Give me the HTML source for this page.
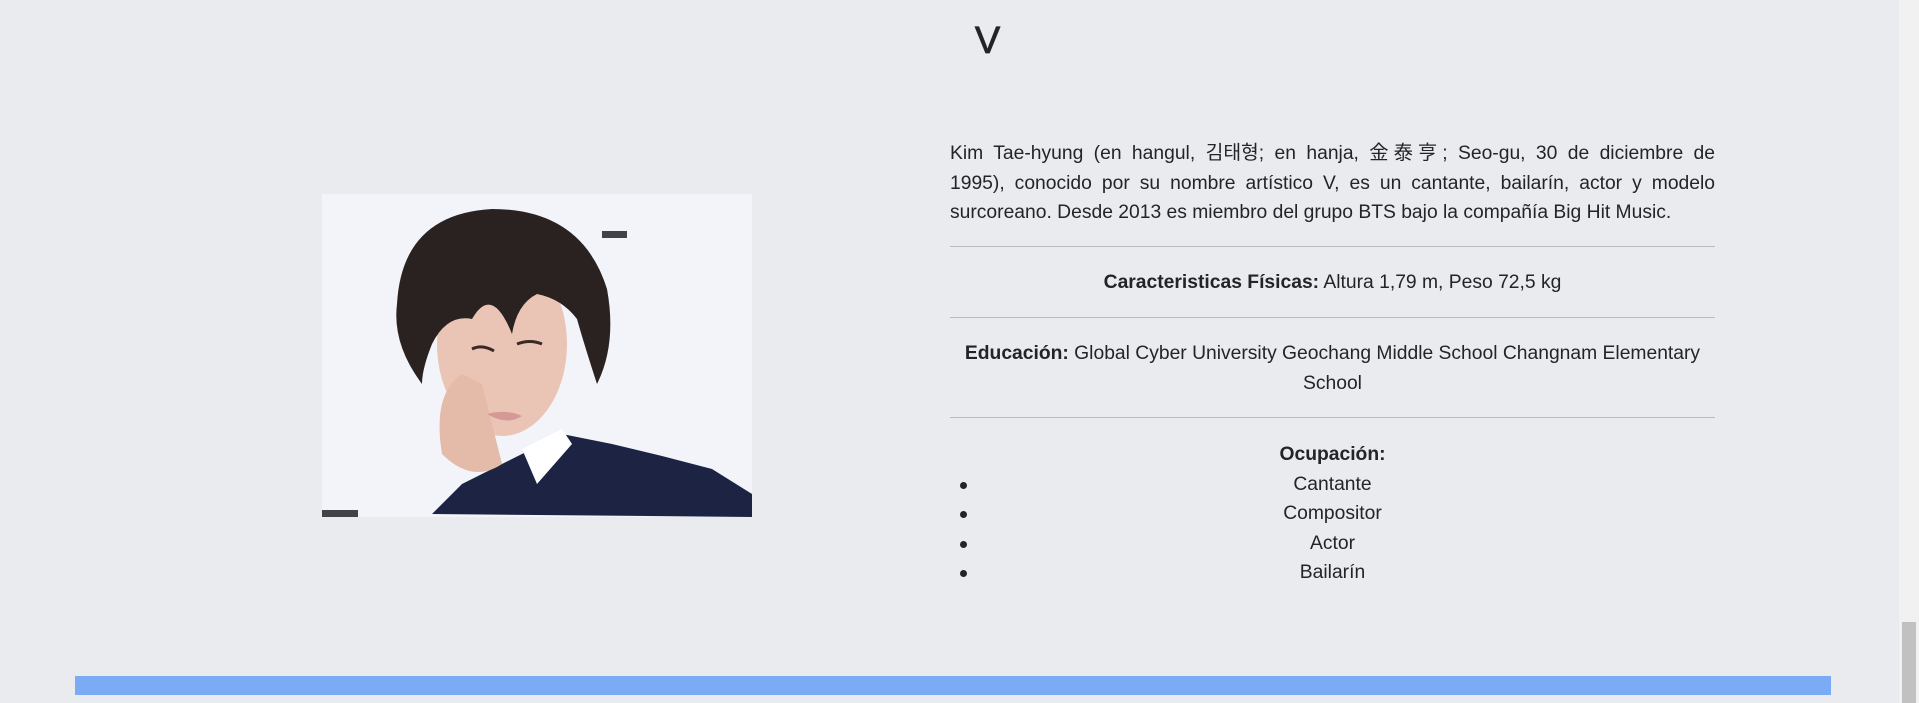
<!DOCTYPE html>
<html><head><meta charset="utf-8"><style>
html,body{margin:0;padding:0;}
body{width:1919px;height:703px;background:#eaebee;position:relative;overflow:hidden;font-family:"Liberation Sans","Noto Sans CJK KR",sans-serif;color:#212529;}
.t{position:absolute;}
h1{position:absolute;left:960px;width:55px;text-align:center;top:20px;margin:0;font-weight:normal;font-size:38px;-webkit-text-stroke:0.8px #212529;}
.col{position:absolute;left:950px;width:765px;font-size:19.3px;line-height:29.5px;}
p{margin:0;}
.j{display:block;text-align:justify;text-align-last:justify;}
hr{border:0;border-top:1px solid #b9bbbe;margin:0;position:absolute;left:950px;width:765px;}
.c{text-align:center;}
ul{margin:0;padding:0;list-style:none;}
li{position:relative;text-align:center;}
li:before{content:"";position:absolute;left:10px;top:12px;width:7px;height:7px;border-radius:50%;background:#212529;}
</style></head><body>
<h1>V</h1>
<svg class="t" style="left:322px;top:194px" width="430" height="323" viewBox="0 0 430 323">
<rect width="430" height="323" fill="#f2f4f9"/>
<rect x="280" y="37" width="25" height="7" fill="#404448"/>
<rect x="0" y="316" width="36" height="7" fill="#404448"/>
<path d="M110 320 L140 290 L200 260 L240 240 L290 250 L340 262 L390 275 L430 300 L430 323 Z" fill="#1d2342"/>
<path d="M200 255 L240 235 L250 250 L215 290 Z" fill="#fff"/>
<ellipse cx="180" cy="150" rx="65" ry="92" fill="#eac5b5"/>
<path d="M120 260 Q110 200 140 180 L160 190 L180 270 Q150 290 120 260Z" fill="#e4bba9"/>
<path d="M75 110 Q80 20 170 15 Q260 15 285 95 Q295 150 275 190 Q262 150 255 125 Q240 105 215 100 Q195 110 190 140 Q170 90 150 125 Q125 120 110 150 Q100 175 100 190 Q70 150 75 110Z" fill="#2a2220"/>
<path d="M195 150 Q208 145 220 150" stroke="#3a2a25" stroke-width="3" fill="none"/>
<path d="M150 155 Q160 150 172 157" stroke="#3a2a25" stroke-width="3" fill="none"/>
<path d="M165 220 Q185 215 200 222 Q185 232 165 220Z" fill="#d69a96"/>
</svg>
<div class="col" style="top:139px;"><p><span class="j">Kim Tae-hyung (en hangul, 김태형; en hanja, 金泰亨; Seo-gu, 30 de diciembre de</span><span class="j">1995), conocido por su nombre artístico V, es un cantante, bailarín, actor y modelo</span><span>surcoreano. Desde 2013 es miembro del grupo BTS bajo la compañía Big Hit Music.</span></p></div>
<hr style="top:246px">
<div class="col c" style="top:268px"><b>Caracteristicas Físicas:</b> Altura 1,79 m, Peso 72,5 kg</div>
<hr style="top:317px">
<div class="col c" style="top:339px;padding:0 12px;box-sizing:border-box;"><b>Educación:</b> Global Cyber University Geochang Middle School Changnam Elementary School</div>
<hr style="top:417px">
<div class="col c" style="top:440px"><b>Ocupación:</b>
<ul><li>Cantante</li><li>Compositor</li><li>Actor</li><li>Bailarín</li></ul></div>
<div class="t" style="left:75px;top:676px;width:1756px;height:19px;background:#7aabf4"></div>
<div class="t" style="left:1899px;top:0;width:20px;height:703px;background:#f1f1f1"></div>
<div class="t" style="left:1902px;top:622px;width:14px;height:81px;background:#c1c1c1"></div>
</body></html>
